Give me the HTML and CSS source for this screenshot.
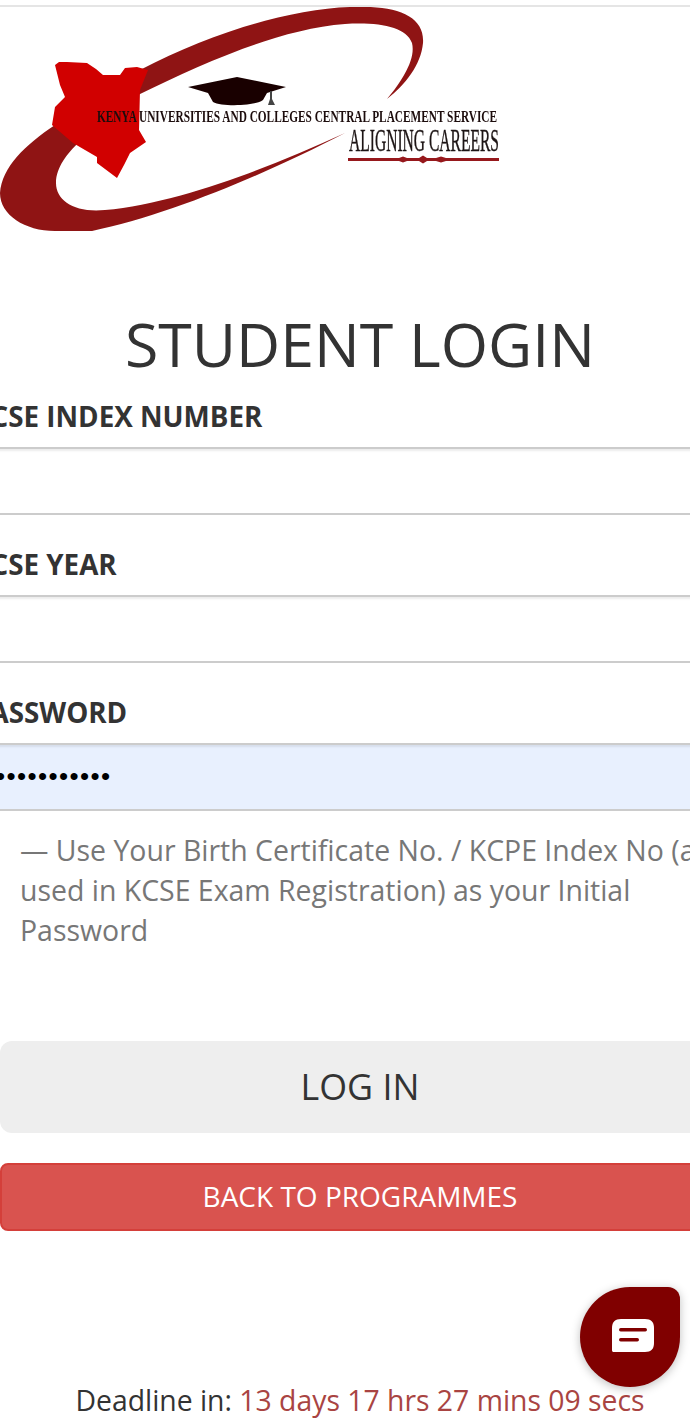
FILE: index.html
```html
<!DOCTYPE html>
<html lang="en">
<head>
<meta charset="utf-8">
<title>Student Login</title>
<link rel="stylesheet" href="styles.css">
</head>
<body>
<div class="page">
  <header class="brand">
    <svg class="logo" viewBox="0 0 500 224" width="500" height="224" aria-label="KUCCPS logo">
      <path class="swoosh" d="M140 63C210 26 290 2 350 0C395-2 425 8 423 36C421 58 405 78 387 92C402 74 416 52 412 36C406 20 380 15 345 17C280 22 205 55 138 88Z"/>
      <path class="swoosh" d="M55 118C25 138 2 160 0 186C0 208 25 224 55 224H92C170 208 270 165 345 126C270 160 180 196 105 203C75 206 56 194 56 176C56 160 68 146 78 136Z"/>
      <path class="map" d="M55 58L59 55L67 55L87 56L96 62L103 68L120 68L125 61L137 60L148 63L140 83L139 123L146 135L130 146L124 158L117 171L97 156L97 150L73 136L52 118L55 100L65 90L60 78L58 70Z"/>
      <path class="cap" d="M188 80L237 70L286 80L267 86L263 93C255 99 222 100 213 95L208 86Z"/>
      <path class="tassel" d="M270 84L272 84L272 92L275 98L268 98L270 92Z"/>
      <text class="motto" x="97" y="114.500" textLength="400" lengthAdjust="spacingAndGlyphs">KENYA UNIVERSITIES AND COLLEGES CENTRAL PLACEMENT SERVICE</text>
      <text class="tagline" x="349" y="144" textLength="150" lengthAdjust="spacingAndGlyphs">ALIGNING CAREERS</text>
      <path class="rule" d="M348 151H399L403 149.500L407 151H419L423 148.500L427 151H436L441 149.500L446 151H499V154H446L441 155.500L436 154H427L423 156.500L419 154H407L403 155.500L399 154H348Z"/>
    </svg>
  </header>

  <h1 class="title">STUDENT LOGIN</h1>

  <form class="form">
    <div class="field">
      <label class="label">KCSE INDEX NUMBER</label>
      <div class="input"></div>
    </div>
    <div class="field">
      <label class="label">KCSE YEAR</label>
      <div class="input"></div>
    </div>
    <div class="field">
      <label class="label">PASSWORD</label>
      <div class="input input-filled">•••••••••••••</div>
    </div>
  </form>

  <p class="help">— Use Your Birth Certificate No. / KCPE Index No (as used in KCSE Exam Registration) as your Initial Password</p>

  <div class="actions">
    <div class="btn btn-login">LOG IN</div>
    <div class="btn btn-back">BACK TO PROGRAMMES</div>
  </div>

  <p class="deadline">Deadline in: <span class="countdown">13 days 17 hrs 27 mins 09 secs</span></p>
</div>

<div class="chat">
  <svg viewBox="0 0 44 36" width="44" height="36" aria-hidden="true">
    <path class="chat-shape" d="M10 1H34C40 1 43 4 43 10V25C43 31 40 34 34 34H3C1.500 34 1 33.500 1 32V10C1 4 4 1 10 1Z"/>
    <rect class="chat-slot" x="8" y="10" width="28" height="3.400" rx="1.700"/>
    <rect class="chat-slot" x="8" y="20" width="20" height="3.400" rx="1.700"/>
  </svg>
</div>
</body>
</html>
```

FILE: styles.css
```css
html, body {
  margin: 0;
  padding: 0;
  width: 690px;
  height: 1428px;
  overflow: hidden;
  background: #fff;
  font-family: "Open Sans", sans-serif;
  color: #333;
}

.page {
  width: 720px;
  height: 1428px;
  overflow: hidden;
}

.brand {
  border-top: 2px solid #e5e5e5;
  margin-top: 5px;
  height: 224px;
}

.logo {
  display: block;
  filter: blur(0.5px);
}

.swoosh { fill: #8f1414; }
.map { fill: #d10000; }
.cap { fill: #190000; }
.tassel { fill: #444; }
.rule { fill: #96181c; }

.motto {
  font-family: "Liberation Serif", serif;
  font-weight: 700;
  font-size: 17px;
  fill: #1c0c0c;
}

.tagline {
  font-family: "Liberation Serif", serif;
  font-size: 31px;
  fill: #1c1414;
  stroke: #1c1414;
  stroke-width: 0.4px;
}

.title {
  margin: 90px 0 0;
  font-size: 60.800px;
  line-height: 46px;
  font-weight: 400;
  text-align: center;
  color: #333;
}

.form {
  margin: 0 0 0 -28px;
  width: 770px;
}

.field {
  display: block;
}

.label {
  display: block;
  height: 49px;
  padding-top: 31px;
  font-size: 27.800px;
  line-height: 37px;
  font-weight: 700;
  color: #333;
}

.input {
  box-sizing: border-box;
  height: 68px;
  padding-left: 3px;
  border-top: 2px solid #ccc;
  border-bottom: 2px solid #ccc;
  box-shadow: inset 0 2px 2px rgba(0, 0, 0, 0.075);
  font-family: "Liberation Sans", sans-serif;
  font-size: 26px;
  line-height: 62px;
  color: #000;
}

.input-filled {
  background: #e8f0fe;
  letter-spacing: 1.400px;
}

.help {
  margin: 19px 0 0 20px;
  width: 700px;
  font-size: 28.450px;
  line-height: 40px;
  color: #777;
}

.actions {
  margin-top: 91px;
  display: flex;
  flex-direction: column;
  gap: 30px;
}

.btn {
  box-sizing: border-box;
  width: 720px;
  text-align: center;
}

.btn-login {
  height: 92px;
  line-height: 90px;
  font-size: 35.800px;
  background: #eee;
  border-radius: 12px;
  color: #333;
}

.btn-back {
  height: 68px;
  line-height: 62px;
  font-size: 28px;
  background: #d9534f;
  border: 2px solid #d43f3a;
  border-radius: 8px;
  color: #fff;
}

.deadline {
  margin: 149px 0 0;
  font-size: 28.350px;
  line-height: 40px;
  text-align: center;
  color: #333;
}

.countdown {
  color: #a94442;
}

.chat {
  position: absolute;
  left: 580px;
  top: 1287px;
  box-sizing: border-box;
  width: 100px;
  height: 100px;
  padding: 0 0 2px 6px;
  background: #800000;
  border-radius: 50% 12px 50% 50%;
  box-shadow: 0 2px 10px rgba(0, 0, 0, 0.25);
  display: flex;
  align-items: center;
  justify-content: center;
}

.chat-shape { fill: #fff; }
.chat-slot { fill: #800000; }
```
